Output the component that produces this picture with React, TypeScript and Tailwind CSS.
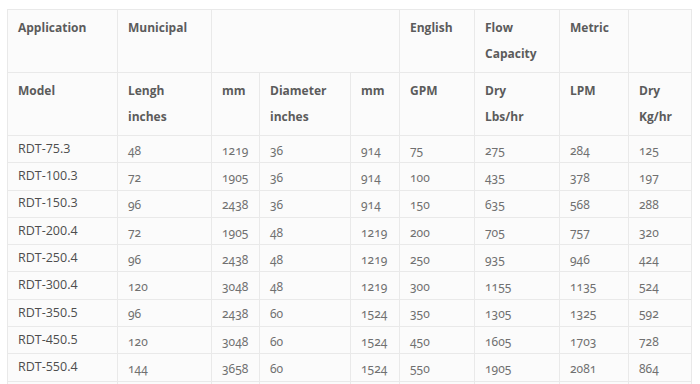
const rows: string[][] = [
  ["RDT-75.3", "48", "1219", "36", "914", "75", "275", "284", "125"],
  ["RDT-100.3", "72", "1905", "36", "914", "100", "435", "378", "197"],
  ["RDT-150.3", "96", "2438", "36", "914", "150", "635", "568", "288"],
  ["RDT-200.4", "72", "1905", "48", "1219", "200", "705", "757", "320"],
  ["RDT-250.4", "96", "2438", "48", "1219", "250", "935", "946", "424"],
  ["RDT-300.4", "120", "3048", "48", "1219", "300", "1155", "1135", "524"],
  ["RDT-350.5", "96", "2438", "60", "1524", "350", "1305", "1325", "592"],
  ["RDT-450.5", "120", "3048", "60", "1524", "450", "1605", "1703", "728"],
  ["RDT-550.4", "144", "3658", "60", "1524", "550", "1905", "2081", "864"],
];

const widths = [110, 94, 48, 91, 49, 75, 85, 69, 63];

const th = "border border-[#e9e9e9] px-[10px] pt-[5px] pb-[5px] align-top text-left font-bold text-[12px] leading-[26px] text-[#5b5b5b]";
const td = "border border-[#e9e9e9] px-[10px] align-middle text-left";

export default function App() {
  return (
    <div className="w-[700px] h-[384px] overflow-hidden bg-white pt-[9px] pl-[7px] font-['Open_Sans',sans-serif]">
      <table className="border-collapse table-fixed bg-[#fbfbfb] w-[684px]">
        <colgroup>
          {widths.map((w, i) => (
            <col key={i} style={{ width: w }} />
          ))}
        </colgroup>
        <thead>
          <tr className="h-[62px]">
            <th className={th}>Application</th>
            <th className={th}>Municipal</th>
            <th className={th} colSpan={3}></th>
            <th className={th}>English</th>
            <th className={th}>Flow<br />Capacity</th>
            <th className={th}>Metric</th>
            <th className={th}></th>
          </tr>
          <tr className="h-[62px]">
            <th className={th}>Model</th>
            <th className={th}>Lengh<br />inches</th>
            <th className={th}>mm</th>
            <th className={th}>Diameter<br />inches</th>
            <th className={th}>mm</th>
            <th className={th}>GPM</th>
            <th className={th}>Dry<br />Lbs/hr</th>
            <th className={th}>LPM</th>
            <th className={th}>Dry<br />Kg/hr</th>
          </tr>
        </thead>
        <tbody>
          {rows.map((r) => (
            <tr key={r[0]} className="h-[27.3px]">
              {r.map((c, i) =>
                i === 0 ? (
                  <td key={i} className={`${td} text-[12.5px] text-[#4d4d4d] font-['Open_Sans',sans-serif]`}>{c}</td>
                ) : (
                  <td key={i} className={`${td} pt-[3px] text-[12px] text-[#707070] font-['Noto_Sans',sans-serif] [font-variant-numeric:oldstyle-nums]`}>{c}</td>
                )
              )}
            </tr>
          ))}
          <tr className="h-[27px]">
            {widths.map((_, i) => (
              <td key={i} className={td}></td>
            ))}
          </tr>
        </tbody>
      </table>
    </div>
  );
}
